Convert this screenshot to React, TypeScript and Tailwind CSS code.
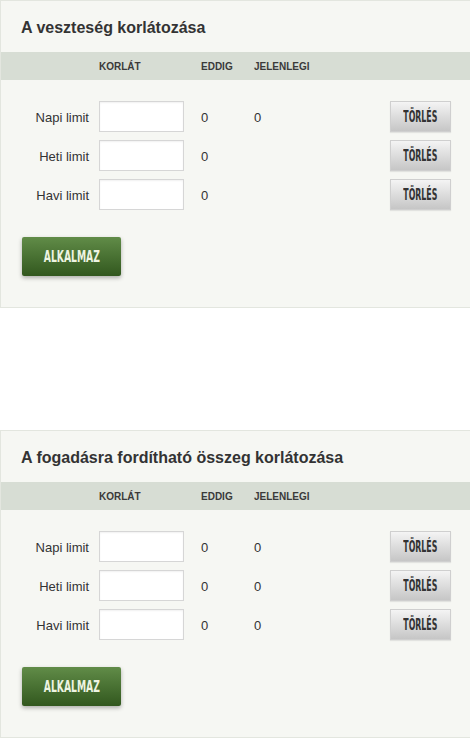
import React from "react";

type Row = { label: string; eddig: string; jelen?: string };

const condensed: React.CSSProperties = {
  fontFamily: "'DejaVu Sans Condensed', 'DejaVu Sans', sans-serif",
  fontStretch: "condensed",
};

function Panel({ title, rows }: { title: string; rows: Row[] }) {
  return (
    <div className="h-[308px] w-[470px] border-t border-l border-b border-[#e3e6df] bg-[#f6f7f3]">
      <div className="flex h-[51px] items-center pl-[20px] pt-[2px]">
        <h2 className="text-[16px] font-bold text-[#333333]">{title}</h2>
      </div>
      <div className="flex h-[28px] items-center bg-[#d7ddd4] text-[10px] font-bold text-[#3a3a3a]">
        <div className="w-[98px]" />
        <div className="w-[102px]">KORLÁT</div>
        <div className="w-[53px]">EDDIG</div>
        <div>JELENLEGI</div>
      </div>
      <div className="flex flex-col gap-[8px] pt-[21px]">
        {rows.map((r) => (
          <div key={r.label} className="flex h-[31px] items-center text-[13px] text-[#333333]">
            <div className="w-[88px] pt-[2px] text-right">{r.label}</div>
            <input className="ml-[10px] h-[31px] w-[85px] border border-[#d6d6d6] bg-white shadow-[inset_0_1px_2px_rgba(0,0,0,0.06)] outline-none" />
            <div className="ml-[17px] w-[53px] pt-[2px]">{r.eddig}</div>
            <div className="w-[40px] pt-[2px]">{r.jelen ?? ""}</div>
            <button
              className="ml-auto mr-[19px] flex h-[31px] w-[61px] items-center justify-center overflow-hidden border border-[#cfcfcf] bg-gradient-to-b from-[#f4f4f4] to-[#c6c6c6] text-[15px] font-bold text-[#333] shadow-[0_1px_1px_rgba(0,0,0,0.08)]"
              style={condensed}
            >
              <span className="inline-block scale-x-[0.58] pt-[1px]">TÖRLÉS</span>
            </button>
          </div>
        ))}
      </div>
      <div className="pl-[21px] pt-[27px]">
        <button
          className="flex h-[39px] w-[99px] items-center justify-center overflow-hidden rounded-[2px] bg-gradient-to-b from-[#618c48] to-[#32581e] text-[16px] font-bold text-[#eef4e2] shadow-[0_2px_4px_rgba(0,0,0,0.3)]"
          style={condensed}
        >
          <span className="inline-block scale-x-[0.64]">ALKALMAZ</span>
        </button>
      </div>
    </div>
  );
}

export default function App() {
  return (
    <div className="h-[738px] w-[470px] overflow-hidden bg-white" style={{ fontFamily: "'Liberation Sans', Arial, sans-serif" }}>
      <Panel
        title="A veszteség korlátozása"
        rows={[
          { label: "Napi limit", eddig: "0", jelen: "0" },
          { label: "Heti limit", eddig: "0" },
          { label: "Havi limit", eddig: "0" },
        ]}
      />
      <div className="h-[122px]" />
      <Panel
        title="A fogadásra fordítható összeg korlátozása"
        rows={[
          { label: "Napi limit", eddig: "0", jelen: "0" },
          { label: "Heti limit", eddig: "0", jelen: "0" },
          { label: "Havi limit", eddig: "0", jelen: "0" },
        ]}
      />
    </div>
  );
}
